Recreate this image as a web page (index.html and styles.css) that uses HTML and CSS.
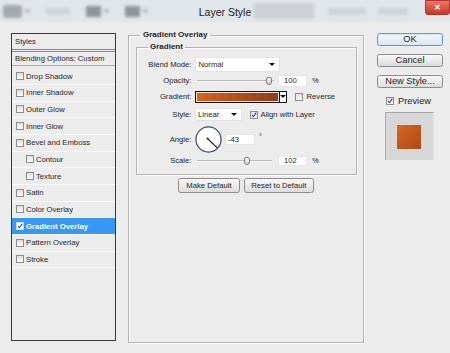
FILE: index.html
```html
<!DOCTYPE html>
<html lang="en">
<head>
    <meta charset="UTF-8">
    <meta name="viewport" content="width=device-width, initial-scale=1.0">
    <title>Layer Style</title>
    <link rel="stylesheet" href="styles.css">
</head>
<body>

    <div class="titlebar">
        <div class="tools">
            <span class="tool brush"></span>
            <span class="tool caret"></span>
            <span class="tool faint"></span>
            <span class="tool square"></span>
            <span class="tool caret"></span>
            <span class="tool square"></span>
            <span class="tool caret"></span>
        </div>
        <div class="title">Layer Style</div>
        <div class="tools right">
            <span class="tool panel-btn"></span>
            <span class="tool faint wide"></span>
            <span class="tool faint"></span>
            <div class="close">&#x2715;</div>
        </div>
    </div>

    <div class="content">
        <div class="styles-panel">
            <div class="panel-head">Styles</div>
            <div class="panel-blend">Blending Options: Custom</div>
            <div class="style-row"><span class="check"></span>Drop Shadow</div>
            <div class="style-row"><span class="check"></span>Inner Shadow</div>
            <div class="style-row"><span class="check"></span>Outer Glow</div>
            <div class="style-row"><span class="check"></span>Inner Glow</div>
            <div class="style-row"><span class="check"></span>Bevel and Emboss</div>
            <div class="style-row sub"><span class="check"></span>Contour</div>
            <div class="style-row sub"><span class="check"></span>Texture</div>
            <div class="style-row"><span class="check"></span>Satin</div>
            <div class="style-row"><span class="check"></span>Color Overlay</div>
            <div class="style-row selected">
                <span class="check"><svg viewBox="0 0 8 8"><path d="M1.4 4.1 L3.2 6.3 L6.9 1.1" /></svg></span>Gradient Overlay
            </div>
            <div class="style-row"><span class="check"></span>Pattern Overlay</div>
            <div class="style-row"><span class="check"></span>Stroke</div>
        </div>

        <fieldset class="group overlay">
            <legend>Gradient Overlay</legend>
            <fieldset class="group gradient">
                <legend>Gradient</legend>

                <div class="field row-blend">
                    <span class="label">Blend Mode:</span>
                    <div class="select mode"><span>Normal</span><span class="arrow"></span></div>
                </div>

                <div class="field row-opacity">
                    <span class="label">Opacity:</span>
                    <div class="slider"><span class="track"></span><span class="thumb" style="left: 71.5px"></span></div>
                    <div class="num">100</div>
                    <span class="unit">%</span>
                </div>

                <div class="field row-gradient">
                    <span class="label">Gradient:</span>
                    <div class="ramp"><span class="fill"></span><span class="drop"><span class="arrow"></span></span></div>
                    <span class="check"></span>
                    <span class="opt">Reverse</span>
                </div>

                <div class="field row-style">
                    <span class="label">Style:</span>
                    <div class="select kind"><span>Linear</span><span class="arrow"></span></div>
                    <span class="check"><svg viewBox="0 0 8 8"><path d="M1.4 4.1 L3.2 6.3 L6.9 1.1" /></svg></span>
                    <span class="opt">Align with Layer</span>
                </div>

                <div class="field row-angle">
                    <span class="label">Angle:</span>
                    <svg class="dial" viewBox="0 0 28 28">
                        <circle cx="14" cy="14" r="13" />
                        <line x1="13.2" y1="13.2" x2="23" y2="22.6" />
                        <circle class="pivot" cx="13" cy="13" r="1.1" />
                    </svg>
                    <div class="num angle">-43</div>
                    <span class="deg">&deg;</span>
                </div>

                <div class="field row-scale">
                    <span class="label">Scale:</span>
                    <div class="slider short"><span class="track"></span><span class="thumb" style="left: 49px"></span></div>
                    <div class="num">102</div>
                    <span class="unit">%</span>
                </div>
            </fieldset>

            <div class="defaults">
                <button class="btn make">Make Default</button>
                <button class="btn reset">Reset to Default</button>
            </div>
        </fieldset>

        <div class="actions">
            <button class="btn side primary">OK</button>
            <button class="btn side">Cancel</button>
            <button class="btn side">New Style...</button>
            <div class="preview-check">
                <span class="check"><svg viewBox="0 0 8 8"><path d="M1.4 4.1 L3.2 6.3 L6.9 1.1" /></svg></span>Preview
            </div>
            <div class="preview"><div class="preview-square"></div></div>
        </div>
    </div>

</body>
</html>
```

FILE: styles.css
```css
* {
    box-sizing: border-box;
}
body {
    margin: 0;
    width: 450px;
    height: 353px;
    overflow: hidden;
    background: #ececec;
    font-family: "Liberation Sans", Arial, sans-serif;
    font-size: 7.7px;
    color: #1e1e1e;
}

/* title bar with the blurred toolbar behind it */
.titlebar {
    height: 22px;
    display: grid;
    grid-template-columns: minmax(0, 1fr) auto minmax(0, 1fr);
    align-items: center;
    background: #e1e6eb;
}
.title {
    font-size: 10.5px;
    color: #1a1a1a;
    padding-top: 1px;
}
.tools {
    display: flex;
    align-items: center;
    height: 22px;
    padding-left: 3px;
    overflow: hidden;
}
.tools.right {
    padding-left: 3px;
    align-items: flex-start;
}
.tool {
    display: block;
    flex: none;
    filter: blur(1.6px);
}
.brush {
    width: 19px;
    height: 13px;
    background: #a3a9af;
    border-radius: 3px;
}
.caret {
    width: 5px;
    height: 4px;
    margin: 0 16px 0 3px;
    background: #b9bec3;
}
.faint {
    width: 24px;
    height: 7px;
    margin-right: 16px;
    background: #cfd4d9;
}
.square {
    width: 15px;
    height: 11px;
    background: #8f959b;
}
.panel-btn {
    width: 60px;
    height: 16px;
    margin-top: 3px;
    margin-right: 14px;
    background: #ccd1d6;
}
.tools.right .faint {
    margin-top: 8px;
    margin-right: 12px;
    width: 30px;
}
.tools.right .faint.wide {
    width: 38px;
}
.close {
    margin-left: auto;
    flex: none;
    width: 25px;
    height: 15px;
    border-radius: 0 0 3px 3px;
    background: linear-gradient(#e9786b, #c7372b);
    border: 1px solid #b3342a;
    color: #fff;
    font-size: 8px;
    font-weight: bold;
    display: flex;
    align-items: center;
    justify-content: center;
}

.content {
    display: flex;
    align-items: flex-start;
    padding: 8px 0 0 11px;
}

/* left list of effects */
.styles-panel {
    width: 105px;
    height: 308px;
    margin-top: 3px;
    border: 1px solid #3a3a3a;
}
.panel-head {
    height: 18px;
    padding-left: 3px;
    line-height: 15px;
    border-bottom: 3px double #8a8a8a;
}
.panel-blend {
    height: 14px;
    padding-left: 3px;
    line-height: 13px;
    border-bottom: 1px solid #a9a9a9;
    margin-bottom: 2.3px;
}
.style-row {
    height: 16.67px;
    display: flex;
    align-items: center;
    gap: 2px;
    padding-left: 4px;
    border-bottom: 1px solid #f8f8f8;
}
.style-row.sub {
    padding-left: 14px;
}
.style-row.selected {
    background: #3896f4;
    color: #fff;
    font-weight: bold;
}

.check {
    width: 8px;
    height: 8px;
    flex: none;
    border: 1px solid #8c8c8c;
    background: linear-gradient(#dedede, #fbfbfb);
    display: flex;
}
.check svg {
    width: 100%;
    height: 100%;
}
.check path {
    fill: none;
    stroke: #263f8e;
    stroke-width: 1.4;
}
.selected .check {
    background: #fff;
    border-color: #c8d8ec;
}

/* group boxes */
.group {
    margin: 0;
    min-width: 0;
    border: 1px solid #b3b3b3;
    box-shadow: 1px 1px 0 #fbfbfb, inset 1px 1px 0 #fbfbfb;
}
.group legend {
    font-size: 8px;
    font-weight: bold;
    line-height: 10px;
    padding: 0 3px;
}
.overlay {
    width: 236px;
    height: 313px;
    margin-left: 12px;
    padding: 0 6.5px;
}
.overlay > legend {
    margin-left: 4.5px;
}
.gradient {
    margin-top: 2px;
    height: 132.5px;
    padding: 5px 0 0 0;
}
.gradient > legend {
    margin-left: 11px;
    padding: 0 2.5px;
}

.field {
    display: flex;
    align-items: center;
}
.label {
    width: 55px;
    margin-right: 3px;
    text-align: right;
}
.row-blend { height: 14.5px; }
.row-opacity { height: 12px; margin-top: 3.3px; }
.row-gradient { height: 12.4px; margin-top: 4px; }
.row-style { height: 13.4px; margin-top: 4.9px; }
.row-angle { height: 27px; margin-top: 4.8px; }
.row-scale { height: 10px; margin-top: 2.7px; }

.select {
    height: 100%;
    display: flex;
    align-items: center;
    justify-content: space-between;
    background: #fff;
    border: 1px solid #e3e3e3;
    padding: 0 4px 0 2.5px;
}
.select.mode {
    width: 85px;
    margin-left: 0.5px;
}
.select.kind {
    width: 47.5px;
}
.arrow {
    width: 0;
    height: 0;
    border-left: 3px solid transparent;
    border-right: 3px solid transparent;
    border-top: 3.5px solid #111;
}

.slider {
    position: relative;
    width: 81px;
    height: 100%;
    display: flex;
    align-items: center;
    padding: 0 2px 0 2.5px;
}
.slider.short {
    padding-right: 3.5px;
}
.track {
    flex: 1;
    height: 2px;
    border-top: 1px solid #b9b9b9;
    border-bottom: 1px solid #fafafa;
}
.thumb {
    position: absolute;
    top: 50%;
    width: 6px;
    height: 8px;
    margin-top: -4px;
    border: 1px solid #7b7b7b;
    border-radius: 2px 2px 3px 3px;
    background: linear-gradient(#fbfbfb, #cfcfcf);
}

.num {
    width: 29px;
    height: 12px;
    margin-left: 2.5px;
    padding-left: 5px;
    display: flex;
    align-items: center;
    background: #fff;
    border: 1px solid #e6e6e6;
}
.row-scale .num {
    height: 10.5px;
}
.unit {
    margin-left: 5px;
}

.ramp {
    width: 92.7px;
    height: 100%;
    display: flex;
    border: 1px solid #141414;
    margin-right: 8.3px;
}
.ramp .fill {
    flex: 1;
    border: 1px solid #f2e2d6;
    background: linear-gradient(to right, #d7641c, #8c3d1d);
}
.ramp .drop {
    width: 7px;
    border-left: 1px solid #141414;
    background: #fff;
    display: flex;
    align-items: center;
    justify-content: center;
}
.opt {
    margin-left: 3px;
}
.row-style .check {
    margin-left: 7.5px;
}

.dial {
    width: 27px;
    height: 27px;
    margin-left: 0.3px;
}
.dial circle {
    fill: #fff;
    stroke: #3b4d70;
    stroke-width: 1.3;
}
.dial line {
    stroke: #1d1d1d;
    stroke-width: 1.2;
}
.dial .pivot {
    fill: #1d1d1d;
    stroke: none;
}
.num.angle {
    width: 30px;
    height: 11px;
    margin-left: 3.2px;
    padding-left: 2px;
}
.deg {
    align-self: flex-start;
    margin: 6px 0 0 4px;
}

/* buttons */
.btn {
    font-family: inherit;
    font-size: 7.7px;
    color: #1e1e1e;
    padding: 0;
    height: 15px;
    border: 1px solid #8c8c8c;
    border-radius: 2.5px;
    background: linear-gradient(#f8f8f8, #dcdcdc);
}
.defaults {
    display: flex;
    justify-content: center;
    gap: 4px;
    margin-top: 3.8px;
}
.btn.make {
    width: 61.7px;
}
.btn.reset {
    width: 70px;
}

.actions {
    width: 66px;
    margin: 3.3px 0 0 13px;
    display: flex;
    flex-direction: column;
    align-items: center;
}
.btn.side {
    width: 66px;
    height: 12.8px;
    font-size: 9.3px;
    line-height: 10px;
    margin-bottom: 8.3px;
}
.btn.primary {
    height: 12.4px;
    border-color: #5a9fd6;
    box-shadow: inset 0 0 0 1px #cfe6f8;
    background: linear-gradient(#f4f8fb, #dfe6ec);
}
.preview-check {
    display: flex;
    align-items: center;
    gap: 4px;
    font-size: 9.3px;
    margin: 0 3px 0 0;
    height: 10px;
}
.preview {
    width: 49px;
    height: 48.3px;
    margin: 6px 2px 0 0;
    background: #d7d7d7;
    border-top: 1px solid #a9a9a9;
    border-left: 1px solid #a9a9a9;
    border-right: 1px solid #e6e6e6;
    display: flex;
    align-items: center;
    justify-content: center;
}
.preview-square {
    width: 23.7px;
    height: 23.7px;
    background: linear-gradient(135deg, #d5651f, #b04a1b);
}
```
